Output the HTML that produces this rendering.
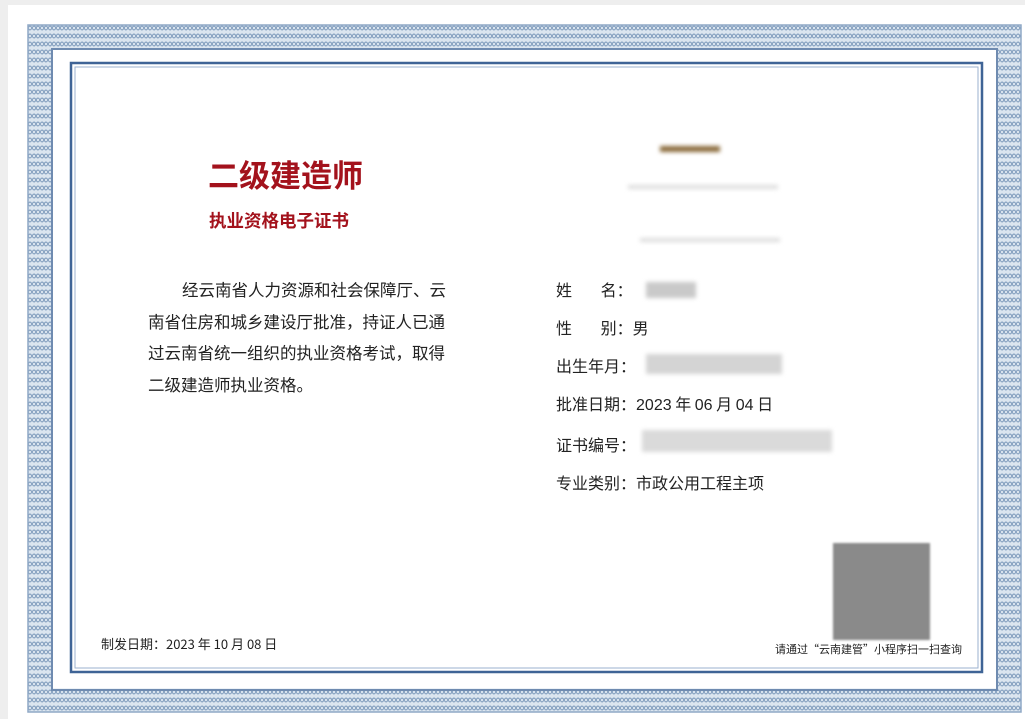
<!DOCTYPE html>
<html><head><meta charset="utf-8"><style>
body{margin:0;width:1025px;height:719px;overflow:hidden;background:#fff;position:relative;font-family:"Liberation Sans","Noto Sans CJK SC",sans-serif;color:#222}
.a{position:absolute;white-space:nowrap}
.c{font-family:"Noto Sans CJK SC",sans-serif}
.b{position:absolute;background:#c9c9c9;filter:blur(2px)}
</style></head><body>
<div class="a" style="left:0;top:0;width:1025px;height:5px;background:#eeeeee"></div>
<div class="a" style="left:0;top:0;width:8px;height:719px;background:#eeeeee"></div>
<svg class="a" style="left:0;top:0" width="1025" height="719">
<defs>
<pattern id="p" width="8" height="8" patternUnits="userSpaceOnUse">
<rect width="8" height="8" fill="#dbe5ef"/>
<path d="M0 4 Q2 0 4 4 T8 4 M0 4 Q2 8 4 4 T8 4" stroke="#7d9abb" stroke-width="0.9" fill="none"/>
</pattern>
</defs>
<rect x="39.5" y="36.5" width="970" height="664" fill="none" stroke="url(#p)" stroke-width="24"/>
<rect x="28" y="25" width="993" height="687" fill="none" stroke="#8fa8c6" stroke-width="1.5"/>
<rect x="52" y="49" width="945" height="641" fill="none" stroke="#6f8bb0" stroke-width="2"/>
<rect x="71" y="63" width="911" height="609" fill="none" stroke="#3f6496" stroke-width="2.5"/>
<rect x="75" y="67" width="903" height="601" fill="none" stroke="#9bb2cf" stroke-width="1"/>
</svg>
<div class="a c" style="left:208px;top:151px;font-size:31px;font-weight:bold;color:#a3121c">二级建造师</div>
<div class="a c" style="left:209px;top:208px;font-size:17.5px;font-weight:bold;color:#a3121c">执业资格电子证书</div>
<div class="a c" style="left:148px;top:274px;width:320px;font-size:16.5px;line-height:31.5px;white-space:normal">
<div style="padding-left:34px">经云南省人力资源和社会保障厅、云</div>
<div>南省住房和城乡建设厅批准，持证人已通</div>
<div>过云南省统一组织的执业资格考试，取得</div>
<div>二级建造师执业资格。</div>
</div>
<div class="b" style="left:660px;top:146px;width:60px;height:6px;background:#8a6a3a"></div>
<div class="b" style="left:628px;top:185px;width:150px;height:4px;background:#ddd"></div>
<div class="b" style="left:640px;top:238px;width:140px;height:4px;background:#ddd"></div>
<div class="c" style="position:absolute;left:556px;top:270px;font-size:16px;line-height:38px">
<div>姓&nbsp;&nbsp;&nbsp;&nbsp;&nbsp;&nbsp;&nbsp;&nbsp;名：</div>
<div>性&nbsp;&nbsp;&nbsp;&nbsp;&nbsp;&nbsp;&nbsp;&nbsp;别：男</div>
<div>出生年月：</div>
<div>批准日期：<span style="font-family:'Liberation Sans'">2023</span> 年 <span style="font-family:'Liberation Sans'">06</span> 月 <span style="font-family:'Liberation Sans'">04</span> 日</div>
<div>证书编号：</div>
<div>专业类别：市政公用工程主项</div>
</div>
<div class="b" style="left:646px;top:282px;width:50px;height:16px"></div>
<div class="b" style="left:646px;top:354px;width:136px;height:20px;background:#d4d4d4"></div>
<div class="b" style="left:642px;top:430px;width:190px;height:22px;background:#dadada"></div>
<div class="b" style="left:833px;top:543px;width:97px;height:97px;background:#8a8a8a;filter:blur(1px)"></div>
<div class="a c" style="left:101px;top:634px;font-size:13px">制发日期：2023 年 10 月 08 日</div>
<div class="a c" style="left:775px;top:641px;font-size:11px">请通过“云南建管”小程序扫一扫查询</div>
</body></html>
